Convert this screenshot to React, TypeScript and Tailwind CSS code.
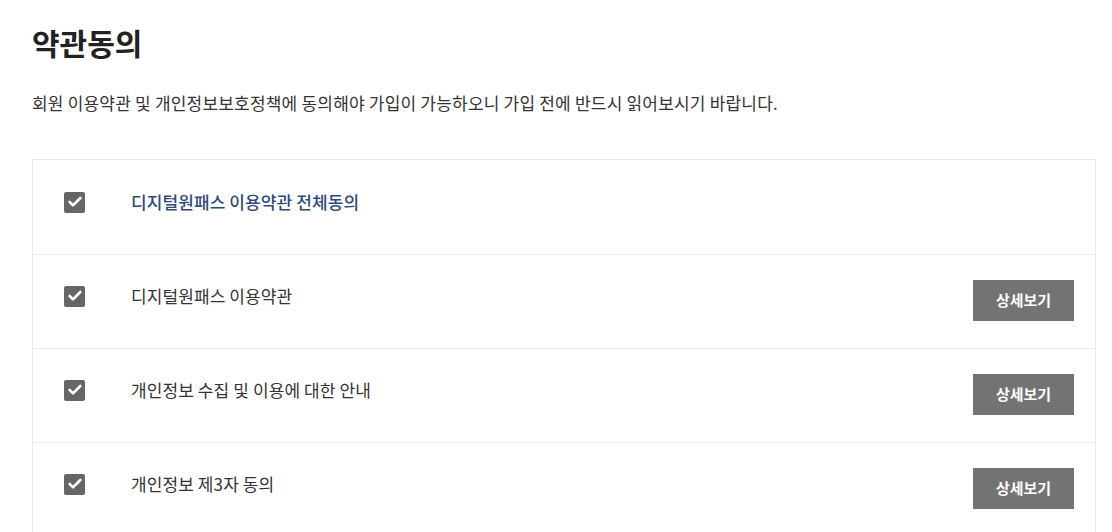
import { Check } from "lucide-react";

const items = [
  { label: "디지털원패스 이용약관", detail: true },
  { label: "개인정보 수집 및 이용에 대한 안내", detail: true },
  { label: "개인정보 제3자 동의", detail: true },
];

function CheckBox() {
  return (
    <span className="flex h-[21px] w-[21px] items-center justify-center rounded-[2px] bg-[#666666]">
      <Check className="h-[16px] w-[16px] text-white" strokeWidth={4} />
    </span>
  );
}

export default function App() {
  return (
    <div
      className="min-h-screen bg-white pl-[32px] pt-[21px] text-[#333]"
      style={{ fontFamily: '"Noto Sans CJK KR", "Noto Sans", sans-serif' }}
    >
      <h1 className="text-[30px] font-bold leading-[42px] text-[#222]">
        약관동의
      </h1>
      <p className="mt-[27px] text-[17px] leading-[26px] tracking-[0.2px] text-[#333]">
        회원 이용약관 및 개인정보보호정책에 동의해야 가입이 가능하오니 가입 전에 반드시 읽어보시기 바랍니다.
      </p>

      <div className="mt-[43px] w-[1064px] border border-[#e8e8e8]">
        <div className="flex h-[95px] items-center border-b border-[#ececec] pb-[10px] pl-[31px]">
          <CheckBox />
          <span className="ml-[46px] text-[17px] font-medium tracking-[0.1px] text-[#2d4a7c]">
            디지털원패스 이용약관 전체동의
          </span>
        </div>
        {items.map((item, i) => (
          <div
            key={i}
            className="flex h-[94px] items-center justify-between border-b border-[#ececec] pb-[3px] pl-[31px] pr-[21px]"
          >
            <div className="mb-[8px] flex items-center">
              <CheckBox />
              <span className="ml-[46px] text-[17px] tracking-[0.1px] text-[#333]">
                {item.label}
              </span>
            </div>
            {item.detail && (
              <button className="h-[41px] w-[101px] bg-[#737373] text-[15px] font-bold text-white">
                상세보기
              </button>
            )}
          </div>
        ))}
      </div>
    </div>
  );
}
